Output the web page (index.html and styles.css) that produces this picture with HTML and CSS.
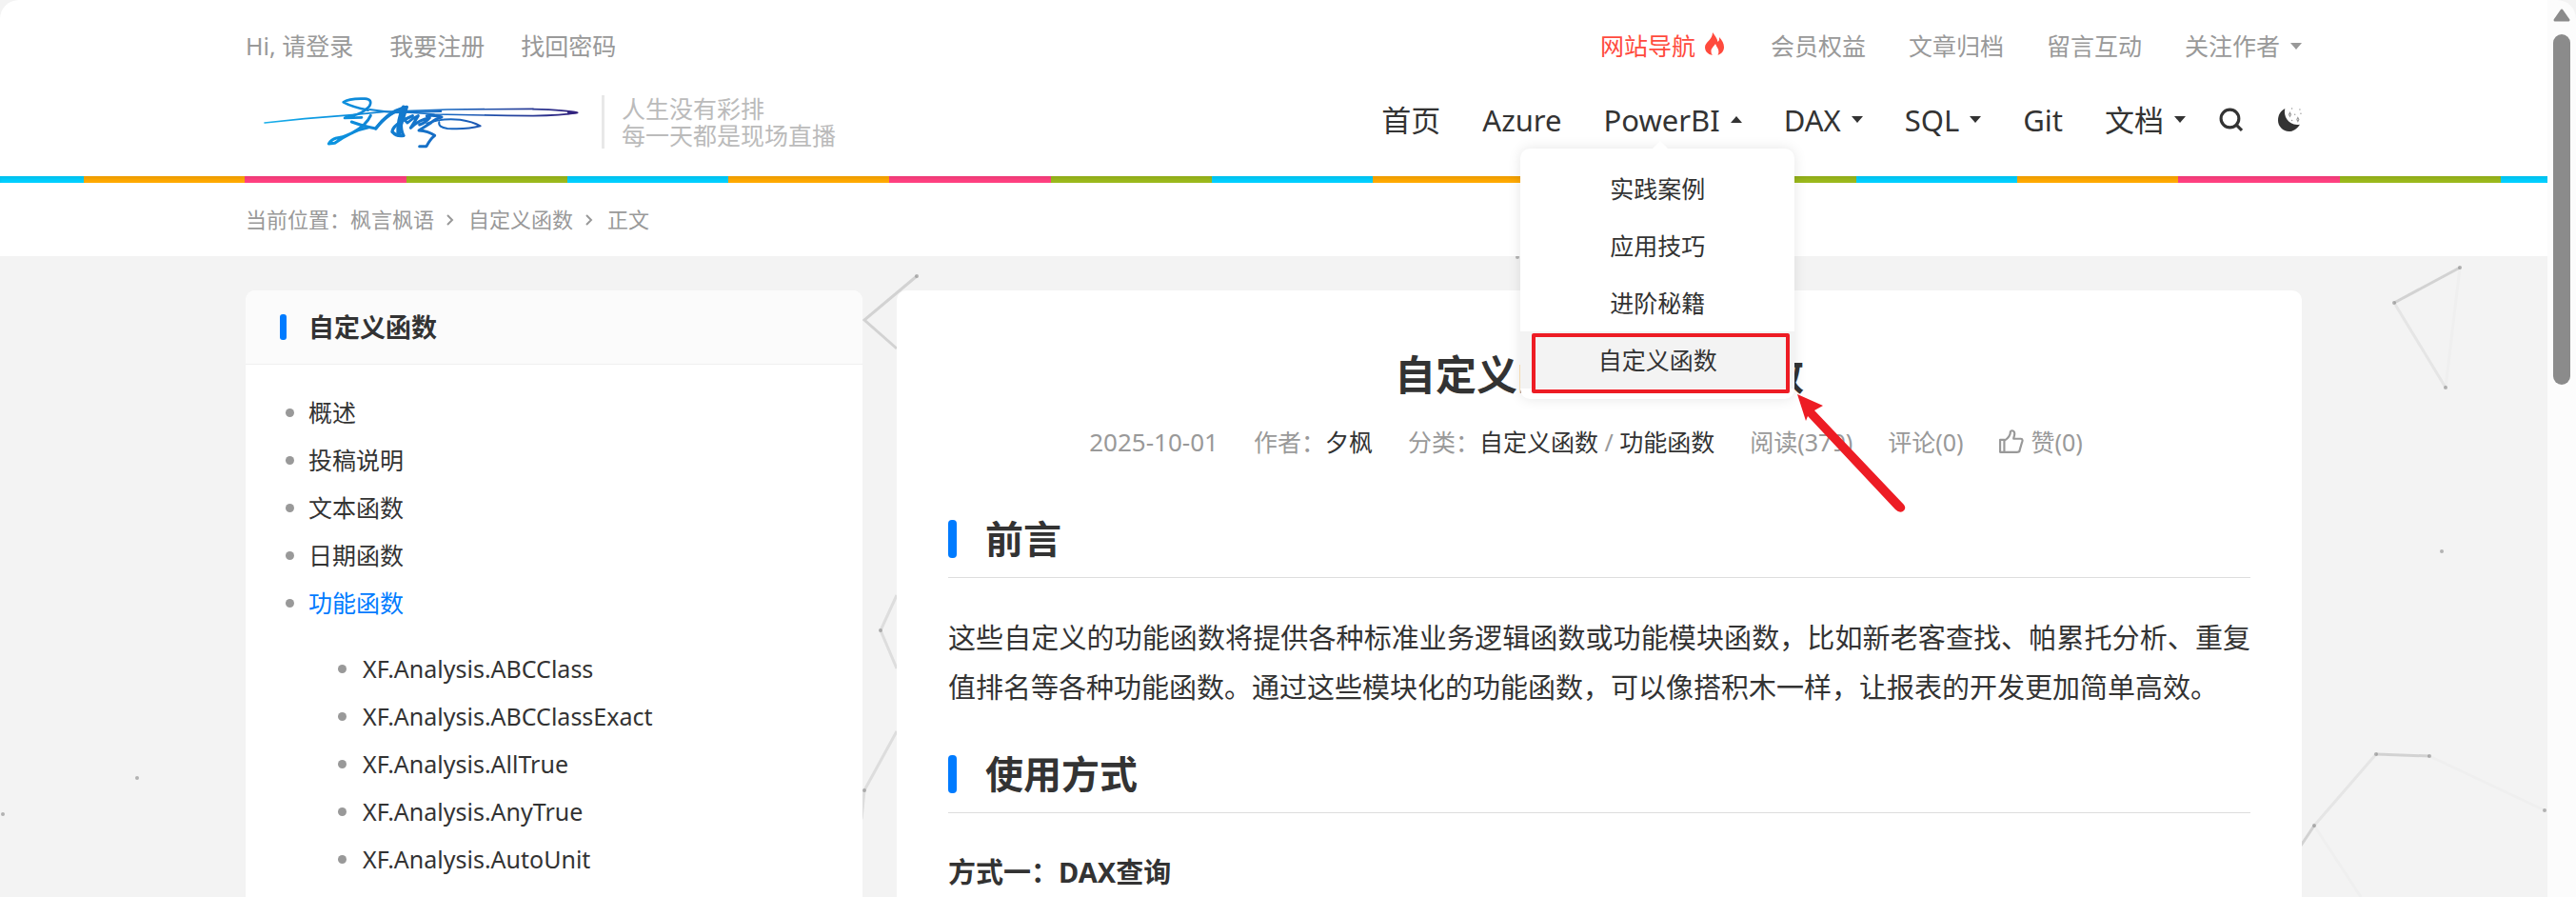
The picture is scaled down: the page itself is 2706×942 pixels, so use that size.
FILE: index.html
```
<!DOCTYPE html>
<html lang="zh-CN">
<head>
  <meta charset="UTF-8">
  <title>自定义函数 - 枫言枫语</title>
  <link rel="stylesheet" href="styles.css">
</head>
<body>
  <div class="page">
    <!-- particle background -->
    <svg class="particles" aria-hidden="true">
      <g stroke="#888" fill="none" stroke-width="3">
        <path d="M963 290L908 336L942 366" opacity=".3"/>
        <path d="M942 625L925 662L942 702M942 768L908 830L905 860" opacity=".2"/>
        <path d="M2515 318L2584 281" opacity=".3"/>
        <path d="M2515 318L2569 407M2496 792L2431 867" opacity=".13"/>
        <path d="M2584 281L2569 407M2552 794L2673 851M2431 867L2480 942" opacity=".03"/>
        <path d="M2496 792L2552 794M2431 867L2417 888" opacity=".3"/>
      </g>
      <g fill="#888" opacity=".6">
        <circle cx="144" cy="817" r="2"/><circle cx="3" cy="855" r="2"/>
        <circle cx="925" cy="662" r="2"/><circle cx="908" cy="830" r="2"/>
        <circle cx="963" cy="290" r="2"/><circle cx="1594" cy="270" r="2"/>
        <circle cx="2515" cy="318" r="2"/><circle cx="2584" cy="281" r="2"/>
        <circle cx="2569" cy="407" r="2"/><circle cx="2565" cy="579" r="2"/>
        <circle cx="2496" cy="792" r="2"/><circle cx="2552" cy="794" r="2"/>
        <circle cx="2431" cy="867" r="2"/><circle cx="2673" cy="851" r="2"/>
      </g>
    </svg>

    <header class="header">
      <div class="container">
        <div class="topbar">
          <div class="topbar-left">
            <a href="#">Hi, 请登录</a>
            <a href="#">我要注册</a>
            <a href="#">找回密码</a>
          </div>
          <div class="topbar-right">
            <a href="#" class="hot">网站导航
              <svg class="flame" viewBox="0 0 20 24"><path d="M8 0C10 3 13 6 13.500 10C15 9 15.300 7 15 5C18 8 20 12 20 15.500C20 19.500 17.500 22.500 13.500 24C15 21 14.500 18 13 16C12.500 15 11.500 13.500 11 12C10 14 6 17 6.500 20C6.600 22 7 23 8 24C3 23 0 20 0 15.500C0 10 8 8 8 0Z" fill="currentColor"/></svg>
            </a>
            <a href="#">会员权益</a>
            <a href="#">文章归档</a>
            <a href="#">留言互动</a>
            <a href="#">关注作者<i class="caret"></i></a>
          </div>
        </div>

        <div class="brandbar">
          <a href="#" class="logo" aria-label="夕枫">
            <svg viewBox="0 0 1050 210">
              <defs>
                <linearGradient id="ink" gradientUnits="userSpaceOnUse" x1="20" y1="0" x2="1010" y2="0">
                  <stop offset="0" stop-color="#1ab0ea"/>
                  <stop offset=".22" stop-color="#0b94e0"/>
                  <stop offset=".6" stop-color="#1866c0"/>
                  <stop offset="1" stop-color="#33207c"/>
                </linearGradient>
              </defs>
              <g fill="none" stroke="url(#ink)" stroke-linecap="round" stroke-linejoin="round">
                <path d="M24 108L150 95L300 83L400 73L600 66L870 64" stroke-width="5"/>
                <path d="M870 65Q980 68 1010 76Q960 84 870 86Q700 84 560 81L470 75" stroke-width="5"/>
                <path d="M980 74L1006 76L980 79" stroke-width="5"/>
                <path d="M355 66L430 76L580 72" stroke-width="6"/>
                <path d="M350 68Q300 58 272 43Q290 30 340 32Q366 34 354 56Q335 78 300 86Q276 90 276 93L330 91" stroke-width="8"/>
                <path d="M358 85Q345 115 300 140Q265 156 250 156Q234 160 226 174L245 172Q300 132 352 122" stroke-width="9"/>
                <path d="M298 105Q340 120 374 126Q400 92 440 70" stroke-width="9"/>
                <path d="M374 126Q410 75 462 60L472 58Q462 90 454 115Q455 138 462 148Q440 152 426 136Q428 112 490 86" stroke-width="10"/>
                <path d="M462 60Q444 100 446 145" stroke-width="14"/>
                <path d="M454 88L474 108Q492 92 508 86L484 124Q510 98 544 92Q530 108 512 114" stroke-width="9"/>
                <path d="M535 86Q560 82 582 90Q560 96 548 108L510 132Q540 134 560 148Q545 160 534 182L512 182" stroke-width="9"/>
                <path d="M535 110Q580 92 640 98Q680 104 704 118Q660 130 600 126Q570 122 574 106" stroke-width="6"/>
              </g>
            </svg>
          </a>
          <p class="slogan">人生没有彩排<br>每一天都是现场直播</p>

          <nav class="nav">
            <a href="#">首页</a>
            <a href="#">Azure</a>
            <div class="nav-item">
              <a href="#">PowerBI<i class="caret caret-up"></i></a>
              <div class="dropdown">
                <a href="#">实践案例</a>
                <a href="#">应用技巧</a>
                <a href="#">进阶秘籍</a>
                <a href="#" class="active">自定义函数</a>
                <div class="mark"></div>
                <svg class="pointer" viewBox="0 0 120 130"><path d="M1 1L28 13L19 18L113 117Q116 121 112 124Q108 126 104 122L12 24L10 29Z" fill="#ed1c24"/></svg>
              </div>
            </div>
            <a href="#">DAX<i class="caret"></i></a>
            <a href="#">SQL<i class="caret"></i></a>
            <a href="#">Git</a>
            <a href="#">文档<i class="caret"></i></a>
            <button type="button" class="icon-btn" aria-label="搜索">
              <svg viewBox="0 0 24 24"><circle cx="11" cy="11" r="9" fill="none" stroke="currentColor" stroke-width="3"/><path d="M17 17L23 23" stroke="currentColor" stroke-width="3"/></svg>
            </button>
            <button type="button" class="icon-btn moon" aria-label="夜间模式">
              <svg viewBox="0 0 24 24"><path d="M7 1C5 9 11 19 22 17C19 22 15 24 11 24C5 24 0 19 0 13C0 7 3 3 7 1Z" fill="currentColor"/><g fill="none" stroke="#999"><path d="M12 5l1 2-1 2-1-2zM20 10l1 2-1 2-1-2z"/></g><g fill="#999"><circle cx="14" cy="1" r=".7"/><circle cx="17" cy="7" r=".7"/><circle cx="23" cy="6" r=".7"/><circle cx="14" cy="13" r=".7"/><circle cx="22" cy="2" r=".7"/></g></svg>
            </button>
          </nav>
        </div>
      </div>
    </header>

    <div class="stripe"></div>

    <div class="crumbs">
      <div class="container">
        <span>当前位置：<a href="#">枫言枫语</a></span>
        <svg class="chevron" viewBox="0 0 8 12"><path d="M1 1L6 6L1 11"/></svg>
        <a href="#">自定义函数</a>
        <svg class="chevron" viewBox="0 0 8 12"><path d="M1 1L6 6L1 11"/></svg>
        <span>正文</span>
      </div>
    </div>

    <div class="container content">
      <aside class="sidebar">
        <h3>自定义函数</h3>
        <ul>
          <li><a href="#">概述</a></li>
          <li><a href="#">投稿说明</a></li>
          <li><a href="#">文本函数</a></li>
          <li><a href="#">日期函数</a></li>
          <li><a href="#" class="current">功能函数</a>
            <ul>
              <li><a href="#">XF.Analysis.ABCClass</a></li>
              <li><a href="#">XF.Analysis.ABCClassExact</a></li>
              <li><a href="#">XF.Analysis.AllTrue</a></li>
              <li><a href="#">XF.Analysis.AnyTrue</a></li>
              <li><a href="#">XF.Analysis.AutoUnit</a></li>
            </ul>
          </li>
        </ul>
      </aside>

      <article class="article">
        <h1>自定义函数：功能函数</h1>
        <div class="meta">
          <time>2025-10-01</time>
          <span>作者：<a href="#">夕枫</a></span>
          <span>分类：<a href="#">自定义函数</a> / <a href="#">功能函数</a></span>
          <span>阅读(379)</span>
          <span>评论(0)</span>
          <button type="button" class="like">
            <svg viewBox="0 0 24 24"><path d="M1 10H5V22H1ZM5 11C8 9 11 6 11 2C13 0 15 2 15 4C15 6 14 8 14 9H21C23 9 23 11 22 13L20 20C20 22 18 22 17 22H5"/></svg>
            赞(0)
          </button>
        </div>
        <h2>前言</h2>
        <p>这些自定义的功能函数将提供各种标准业务逻辑函数或功能模块函数，比如新老客查找、帕累托分析、重复值排名等各种功能函数。通过这些模块化的功能函数，可以像搭积木一样，让报表的开发更加简单高效。</p>
        <h2>使用方式</h2>
        <h4>方式一：DAX查询</h4>
      </article>
    </div>
  </div>

  <div class="scrollbar" aria-hidden="true">
    <svg class="scroll-up" viewBox="0 0 18 14"><path d="M9 2L16 12H2Z" fill="#8b8b8b" stroke="#8b8b8b" stroke-width="3" stroke-linejoin="round"/></svg>
    <div class="scroll-thumb"></div>
  </div>
</body>
</html>
```
FILE: styles.css
```
* {
  box-sizing: border-box;
}
html {
  background: #f3f3f3;
}
body {
  margin: 0;
  display: flex;
  height: 100vh;
  overflow: hidden;
  border-radius: 20px 20px 0 0;
  background: #f3f3f3;
  color: #333;
  font-family: "Noto Sans", "Noto Sans CJK SC", sans-serif;
  font-size: 25px;
  line-height: 36px;
}
a {
  color: inherit;
  text-decoration: none;
}
h1, h2, h3, h4, p, ul {
  margin: 0;
  padding: 0;
}
button {
  padding: 0;
  border: none;
  background: none;
  color: inherit;
  font: inherit;
  cursor: pointer;
}
.page {
  position: relative;
  flex: 1;
}
.particles {
  position: absolute;
  left: 0;
  top: 0;
  width: 100%;
  height: 100%;
}
.container {
  width: 100%;
  max-width: 2160px;
  margin: 0 auto;
}

/* header */
.header {
  position: relative;
  z-index: 2;
  background: #fff;
}
.topbar {
  display: flex;
  justify-content: space-between;
  padding-top: 30px;
  color: #999;
}
.topbar-left {
  display: flex;
  gap: 38px;
}
.topbar-right {
  display: flex;
  gap: 45px;
}
.topbar-right a {
  display: flex;
  align-items: center;
}
.topbar-right .hot {
  color: #ff4a3d;
}
.flame {
  width: 20px;
  height: 24px;
  margin: 0 4px 4px 10px;
}
.caret {
  margin-left: 11px;
  border: 6px solid transparent;
  border-top: 7px solid currentColor;
  border-bottom: 0;
}
.caret-up {
  border-top: 0;
  border-bottom: 7px solid currentColor;
}
.brandbar {
  display: flex;
  align-items: center;
  height: 119px;
  padding-top: 4px;
}
.logo {
  width: 374px;
  padding-left: 12px;
}
.logo svg {
  display: block;
  width: 350px;
  height: 70px;
}
.slogan {
  padding-left: 18px;
  border-left: 3px solid #e8e8e8;
  color: #bbb;
  line-height: 28px;
}
.nav {
  display: flex;
  align-items: center;
  gap: 44px;
  margin-left: auto;
  padding-bottom: 4px;
  font-size: 31px;
}
.nav > a,
.nav-item > a {
  display: flex;
  align-items: center;
}
.nav-item {
  position: relative;
}
.icon-btn {
  width: 25px;
  height: 25px;
  margin-left: -9px;
}
.icon-btn svg {
  display: block;
  width: 100%;
  height: 100%;
}
.moon {
  margin-left: -7px;
}

/* dropdown */
.dropdown {
  position: absolute;
  top: 48px;
  left: 50%;
  width: 288px;
  margin-left: -160px;
  padding: 12px 0 11px;
  border-radius: 10px;
  background: #fff;
  box-shadow: 0 0 14px rgba(0, 0, 0, 0.1);
  font-size: 25px;
  text-align: center;
}
.dropdown::before {
  content: "";
  position: absolute;
  top: -8px;
  left: 139px;
  border: 8px solid transparent;
  border-top: 0;
  border-bottom-color: #fff;
}
.dropdown a {
  display: block;
  line-height: 60px;
}
.dropdown .active {
  background: #f3f3f3;
}
.mark {
  position: absolute;
  left: 12px;
  bottom: 6px;
  width: 271px;
  height: 63px;
  border: 4px solid #ed1c24;
  border-radius: 2px;
}
.pointer {
  position: absolute;
  left: 290px;
  top: 257px;
  width: 120px;
  height: 130px;
}

.stripe {
  position: relative;
  height: 7px;
  background: repeating-linear-gradient(90deg, #00cfff 0 169px, #ffa900 169px 338px, #ff4081 338px 508px, #9bb91c 508px 677px) -81px 0 / 3385px 7px;
  box-shadow: inset 0 3px 3px rgba(0, 0, 0, 0.07);
}

/* breadcrumbs */
.crumbs {
  position: relative;
  padding: 20px 0 21px;
  background: #fff;
  color: #999;
  font-size: 22px;
}
.crumbs .container {
  display: flex;
  align-items: center;
}
.chevron {
  width: 8px;
  height: 12px;
  margin: 2px 15px 0 13px;
  fill: none;
  stroke: #999;
  stroke-width: 2;
}

.content {
  position: relative;
  display: flex;
  align-items: stretch;
  gap: 36px;
  height: calc(100vh - 269px);
  padding-top: 36px;
}

/* sidebar */
.sidebar {
  width: 30%;
  border-radius: 10px 10px 0 0;
  background: #fff;
  overflow: hidden;
}
.sidebar h3 {
  display: flex;
  align-items: center;
  height: 78px;
  padding-left: 36px;
  border-bottom: 1px solid #f0f0f0;
  background: #fbfbfb;
  font-size: 27px;
}
.sidebar h3::before {
  content: "";
  width: 7px;
  height: 27px;
  margin-right: 23px;
  border-radius: 3px;
  background: #007bff;
}
.sidebar ul {
  padding: 25px 0 0 42px;
  list-style: none;
}
.sidebar ul ul {
  padding: 19px 0 0 55px;
}
.sidebar li a {
  display: flex;
  align-items: center;
  line-height: 50px;
}
.sidebar li a::before {
  content: "";
  width: 9px;
  height: 9px;
  margin-right: 15px;
  border-radius: 50%;
  background: #999;
}
.sidebar ul ul a::before {
  margin-right: 17px;
}
.current {
  color: #007bff;
}

/* article */
.article {
  flex: 1;
  padding: 54px 54px 0;
  border-radius: 10px 10px 0 0;
  background: #fff;
  overflow: hidden;
}
.article h1 {
  font-size: 43px;
  line-height: 70px;
  text-align: center;
}
.meta {
  display: flex;
  justify-content: center;
  gap: 37px;
  margin: 17px 0 56px;
  padding-right: 28px;
  color: #999;
}
.meta time {
  font-size: 26px;
}
.meta a {
  color: #333;
}
.like {
  display: flex;
  align-items: center;
  gap: 8px;
}
.like svg {
  width: 26px;
  height: 26px;
  fill: none;
  stroke: #999;
  stroke-width: 2;
  stroke-linejoin: round;
}
.article h2 {
  display: flex;
  align-items: center;
  margin-top: 37px;
  padding-bottom: 12px;
  border-bottom: 1px solid #ddd;
  font-size: 40px;
  line-height: 56px;
}
.article h2::before {
  content: "";
  width: 9px;
  height: 40px;
  margin-right: 30px;
  border-radius: 4px;
  background: #007bff;
}
.article p {
  margin: 37px 0;
  font-size: 29px;
  line-height: 52px;
  text-align: justify;
}
.article h4 {
  margin-top: 36px;
  font-size: 29px;
  line-height: 52px;
}

/* page scrollbar */
.scrollbar {
  width: 30px;
  padding: 9px 6px 0;
  background: #fcfcfc;
}
.scroll-up {
  display: block;
  width: 18px;
  height: 14px;
}
.scroll-thumb {
  height: 368px;
  margin-top: 13px;
  border-radius: 9px;
  background: #8b8b8b;
}
```
